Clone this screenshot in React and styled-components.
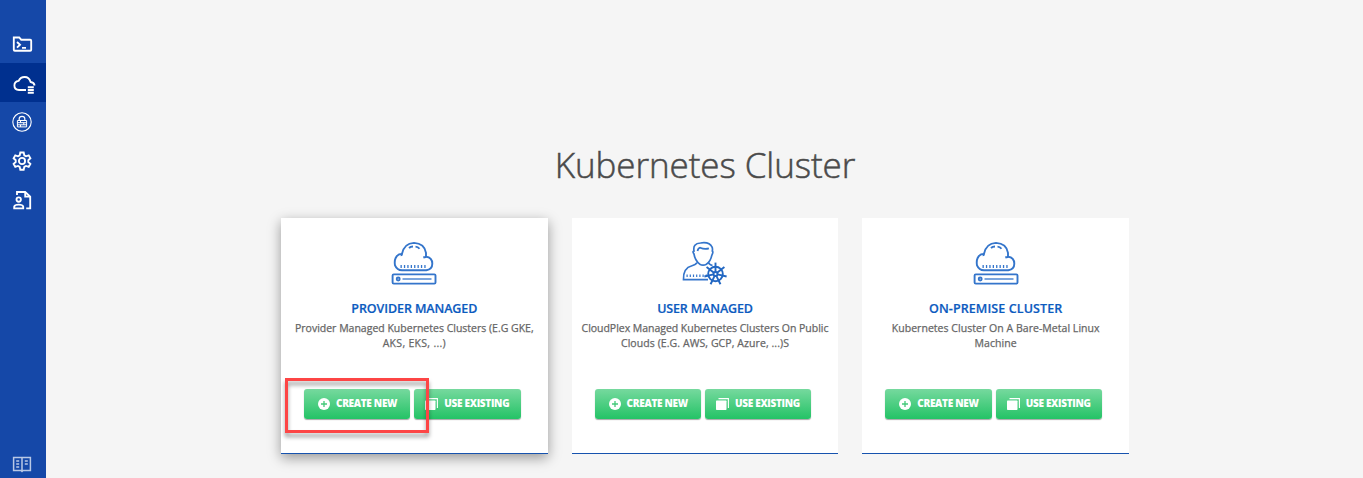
import React from "react";
import styled, { createGlobalStyle } from "styled-components";

const GlobalStyle = createGlobalStyle`
  *, *::before, *::after { box-sizing: border-box; }
  body {
    margin: 0;
    background: #f5f5f5;
    font-family: "Open Sans", "Noto Sans", sans-serif;
  }
`;

const Page = styled.div`
  display: flex;
  height: 478px;
  overflow: hidden;
`;

const Sidebar = styled.nav`
  flex: 0 0 46px;
  display: flex;
  flex-direction: column;
  padding-top: 24px;
  background: #1548a8;
`;

const NavItem = styled.a`
  display: flex;
  align-items: center;
  justify-content: center;
  flex: 0 0 39px;
  padding-right: 2px;
  color: #fff;
  background: ${(p) => (p.$active ? "#00308f" : "transparent")};
  ${(p) => p.$active && "padding: 3px 0 0;"}
  ${(p) => p.$bottom && "margin-top: auto; flex-basis: 29px; color: #b9c8e5;"}
`;

const Glyph = styled.svg`
  display: block;
  width: 24px;
  height: 24px;
  fill: none;
  overflow: visible;
  stroke: currentColor;
  stroke-width: 1.85;
`;

const Main = styled.main`
  flex: 1;
  display: flex;
  flex-direction: column;
  align-items: center;
  padding-left: 1px;
`;

const Heading = styled.h1`
  margin: 141px 0 0;
  height: 77px;
  font-size: 35px;
  line-height: 47px;
  font-weight: 300;
  letter-spacing: -0.08px;
  color: #4a4a4a;
  -webkit-text-stroke: 0.5px #4a4a4a;
  white-space: nowrap;
`;

const Cards = styled.div`
  display: grid;
  grid-template-columns: repeat(3, 1fr);
  gap: 24px;
  width: 848px;
`;

const Card = styled.section`
  position: relative;
  display: flex;
  flex-direction: column;
  align-items: center;
  height: 236px;
  padding-top: 21px;
  background: #fff;
  border-bottom: 1px solid #1753ae;
  box-shadow: ${(p) => (p.$raised ? "0 4px 12px rgba(0, 0, 0, 0.38)" : "none")};
`;

const Picture = styled.svg`
  display: block;
  width: 50px;
  height: 50px;
  fill: none;
  stroke: #3475cb;
  stroke-width: 1.9;
`;

const CardTitle = styled.h2`
  margin: 11px 0 0;
  font-size: 12.5px;
  line-height: 18px;
  font-weight: 600;
  letter-spacing: ${(p) => p.$spacing}px;
  color: #0c5bbf;
  -webkit-text-stroke: 0.2px #0c5bbf;
  white-space: nowrap;
`;

const Description = styled.p`
  margin: 3px 0 0;
  height: 68px;
  font-size: 10.5px;
  line-height: 15px;
  color: #666;
  -webkit-text-stroke: 0.25px #666;
  text-align: center;
`;

const Line = styled.span`
  display: block;
  white-space: nowrap;
  letter-spacing: ${(p) => p.$spacing}px;
`;

const Actions = styled.div`
  display: flex;
  gap: 4px;
  margin-right: 4px;
`;

const Button = styled.button`
  display: flex;
  align-items: center;
  width: 106.4px;
  height: 30px;
  padding: 0 0 0 ${(p) => p.$inset}px;
  gap: 6px;
  border: 0;
  border-radius: 3px;
  background: linear-gradient(#76d99e, #24c366);
  box-shadow: 0 1px 1px rgba(0, 0, 0, 0.35);
  color: #fff;
  font-family: inherit;
  font-size: 10px;
  font-weight: 800;
  letter-spacing: ${(p) => p.$spacing}px;
  white-space: nowrap;
`;

const ButtonLabel = styled.span`
  line-height: 14px;
  padding-bottom: 2px;
`;

const ButtonIcon = styled.svg`
  flex: none;
  width: ${(p) => p.$width}px;
  height: 12px;
`;

const Highlight = styled.div`
  position: absolute;
  left: 4px;
  top: 160px;
  width: 144px;
  height: 55px;
  border: 3px solid #fd4545;
  filter: drop-shadow(0 4px 2px rgba(0, 0, 0, 0.4));
  pointer-events: none;
`;

const TerminalFolder = () => (
  <Glyph viewBox="0 0 24 24">
    <path d="M3.8 5.500h5.400l2 2.200h9q1 0 1 1v9q0 1-1 1H4.800q-1 0-1-1z" />
    <path d="M7 10l3 2.800L7 15.600M12 15.800h4" />
  </Glyph>
);

const CloudList = () => (
  <Glyph viewBox="0 0 24 24">
    <path d="M15 18H8q-4.600 -.3-4.600-4.500 0-4 4.200-4.600Q9.500 5 13.600 5q4.600 0 6 5 3.400.4 4 3.500" />
    <path d="M16.800 15.200h6M16.800 18h6M16.800 20.800h6" strokeWidth="1.900" />
  </Glyph>
);

const LockBricks = () => (
  <Glyph viewBox="0 0 24 24">
    <circle cx="12" cy="12" r="9.200" strokeWidth="1.100" />
    <path d="M9.200 10V8.600q0-2.300 2.800-2.300t2.800 2.300V10" strokeWidth="1.200" />
    <path d="M7.400 10.500h9.200v6.400H7.400zM7.400 12.700h9.200M7.400 14.800h9.200M10.500 10.500v2.200M13.800 12.700v2.100M10.500 14.800v2.100" strokeWidth="1" />
  </Glyph>
);

const Gear = () => (
  <Glyph viewBox="0 0 24 24">
    <path d="M10.300 3.500h3.400l.6 2.800 1.700 1 2.700-.9 1.700 2.900-2.100 1.900v1.800l2.100 1.900-1.700 2.900-2.700-.9-1.700 1-.6 2.800h-3.400l-.6-2.800-1.700-1-2.700.9-1.700-2.900L5.700 13v-1.800L3.600 9.300l1.700-2.900 2.700.9 1.700-1z" />
    <circle cx="12" cy="12" r="3.100" />
  </Glyph>
);

const UserFile = () => (
  <Glyph viewBox="0 0 24 24">
    <path d="M7 7V4h8.200l5 4.600V20.300h-4M15.200 4v4.600h5" />
    <circle cx="8.700" cy="11.500" r="2.200" />
    <path d="M4.200 20.400v-1.800q.5-2 4.500-2t4.500 2v1.800z" />
  </Glyph>
);

const OpenBook = () => (
  <Glyph viewBox="0 0 24 24">
    <path d="M12 5.500H3.600v13H11l1 1 1-1h7.400v-13zM12 5.500v14" strokeWidth="1.500" />
    <path d="M6.200 9h3M6.200 12h3M6.200 15h3M14.800 9h3M14.800 12h3" strokeWidth="1.500" />
  </Glyph>
);

const CloudServer = () => (
  <Picture viewBox="0 0 50 50">
    <path d="M13 31.300q-5-.2-7-5-1.300-7.300 3.500-10.600 1.500-.8 3.500-.8Q15 4.500 25 3.900q10.500 .5 12 10v3.800q6.300.7 6.300 7 0 5.500-6 6.600z" />
    <path d="M13 14q-.6 1.700-.4 3M37 18q-1.500 0-2.700.5M20 9q1.500-1.500 4-1.500M26.500 7.600q2.500.2 4 2.200" />
    <path d="M11.500 27.500h27" strokeWidth="2.800" strokeDasharray="1.300 2.100" />
    <rect x="3.600" y="35.400" width="42.900" height="9.200" rx="1.200" />
    <circle cx="9.200" cy="40" r="1.500" />
    <path d="M13.500 40h29" strokeWidth="1.300" />
  </Picture>
);

const UserHelm = () => (
  <Picture viewBox="0 0 50 50">
    <g strokeWidth="1.700">
      <path d="M14 15q-2-3 0-3Q12.600 4.500 20.500 4q9-1.400 11.500 4 .8 1.500.3 4 1.300 1-.5 4.300-1.200 6-5.400 8.900-3.400 2-6.600 0Q15 21.500 14 15zM17.500 12q.8-3 2.600-3.300 4.500 2 8.800.7" />
      <path d="M17 23.500q-1 2.200-5 3.200Q2.900 29 3.500 40.700H28M28.500 23.500q.6 2 4 3" />
    </g>
    <path d="M6.500 36.800h21" strokeWidth="2.400" strokeDasharray="1.200 2" />
    <g strokeWidth="1.900" stroke="#2267c2">
      <circle cx="35.500" cy="35" r="7.300" />
      <circle cx="35.500" cy="35" r="2" />
      {[0, 51.43, 102.86, 154.29, 205.71, 257.14, 308.57].map((angle) => (
        <path key={angle} d="M35.500 33v-9.400" transform={`rotate(${angle} 35.500 35)`} />
      ))}
    </g>
  </Picture>
);

const PlusIcon = () => (
  <ButtonIcon viewBox="0 0 12 12" $width={12}>
    <circle cx="6" cy="6" r="6" fill="#fff" />
    <path d="M6 3v6M3 6h6" stroke="#43c979" strokeWidth="1.300" />
  </ButtonIcon>
);

const StackIcon = () => (
  <ButtonIcon viewBox="0 0 13 12" $width={13}>
    <rect x="0" y="2.500" width="10.500" height="9.500" rx=".7" fill="#fff" />
    <path d="M2.500.6h9.900V10" fill="none" stroke="#fff" strokeWidth="1.100" />
  </ButtonIcon>
);

const clusters = [
  {
    title: "PROVIDER MANAGED", spacing: -0.1, icon: CloudServer, highlighted: true,
    lines: [["Provider Managed Kubernetes Clusters (E.G GKE,", 0], ["AKS, EKS, ...)", 0.3]],
  },
  {
    title: "USER MANAGED", spacing: -0.15, icon: UserHelm,
    lines: [["CloudPlex Managed Kubernetes Clusters On Public", -0.03], ["Clouds (E.G. AWS, GCP, Azure, ...)S", 0.08]],
  },
  {
    title: "ON-PREMISE CLUSTER", spacing: 0.1, icon: CloudServer,
    lines: [["Kubernetes Cluster On A Bare-Metal Linux", 0.04], ["Machine", 0.1]],
  },
];

export default function App() {
  return (
    <Page>
      <GlobalStyle />
      <Sidebar>
        <NavItem><TerminalFolder /></NavItem>
        <NavItem $active><CloudList /></NavItem>
        <NavItem><LockBricks /></NavItem>
        <NavItem><Gear /></NavItem>
        <NavItem><UserFile /></NavItem>
        <NavItem $bottom><OpenBook /></NavItem>
      </Sidebar>
      <Main>
        <Heading>Kubernetes Cluster</Heading>
        <Cards>
          {clusters.map(({ title, spacing, icon: Icon, lines, highlighted }) => (
            <Card key={title} $raised={highlighted}>
              <Icon />
              <CardTitle $spacing={spacing}>{title}</CardTitle>
              <Description>
                {lines.map(([text, gap]) => (
                  <Line key={text} $spacing={gap}>{text}</Line>
                ))}
              </Description>
              <Actions>
                <Button $inset={14} $spacing={-0.3}>
                  <PlusIcon />
                  <ButtonLabel>CREATE NEW</ButtonLabel>
                </Button>
                <Button $inset={11} $spacing={-0.3}>
                  <StackIcon />
                  <ButtonLabel>USE EXISTING</ButtonLabel>
                </Button>
              </Actions>
              {highlighted && <Highlight />}
            </Card>
          ))}
        </Cards>
      </Main>
    </Page>
  );
}
